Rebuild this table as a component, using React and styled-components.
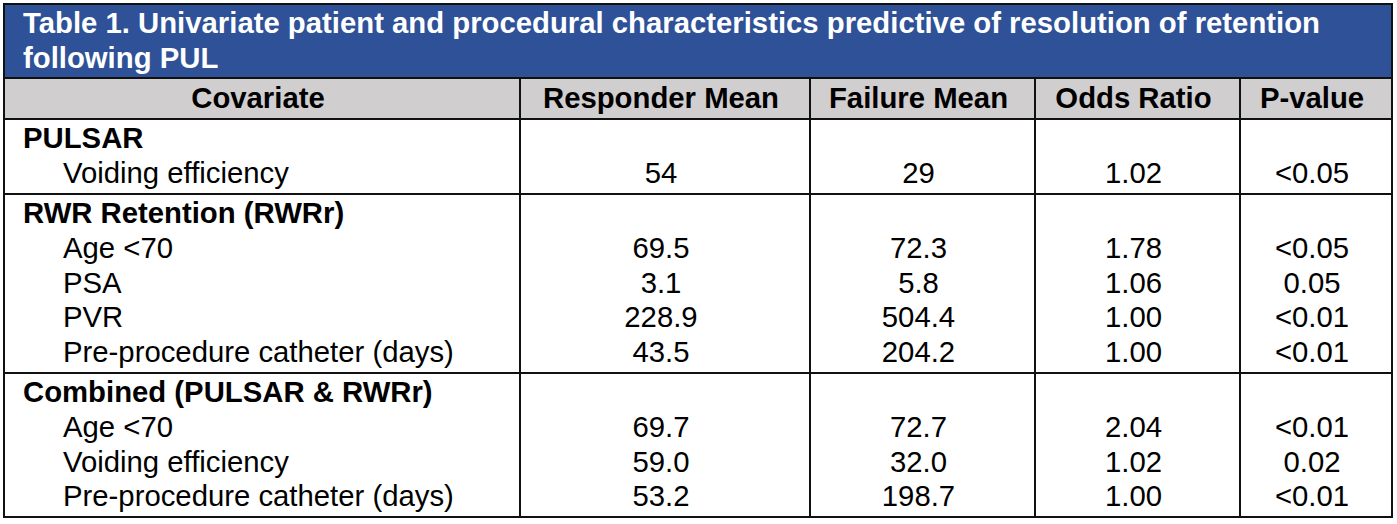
import React from "react";
import styled, { createGlobalStyle } from "styled-components";

const GlobalStyle = createGlobalStyle`
  html, body {
    margin: 0;
    padding: 0;
    background: #fff;
  }
  body {
    font-family: "Liberation Sans", Arial, sans-serif;
    color: #000;
  }
`;

const sections = [
  {
    title: "PULSAR",
    rows: [["Voiding efficiency", "54", "29", "1.02", "<0.05"]],
  },
  {
    title: "RWR Retention (RWRr)",
    rows: [
      ["Age <70", "69.5", "72.3", "1.78", "<0.05"],
      ["PSA", "3.1", "5.8", "1.06", "0.05"],
      ["PVR", "228.9", "504.4", "1.00", "<0.01"],
      ["Pre-procedure catheter (days)", "43.5", "204.2", "1.00", "<0.01"],
    ],
  },
  {
    title: "Combined (PULSAR & RWRr)",
    rows: [
      ["Age <70", "69.7", "72.7", "2.04", "<0.01"],
      ["Voiding efficiency", "59.0", "32.0", "1.02", "0.02"],
      ["Pre-procedure catheter (days)", "53.2", "198.7", "1.00", "<0.01"],
    ],
  },
];

const columns = [
  { label: "Covariate", width: 516 },
  { label: "Responder Mean", width: 290 },
  { label: "Failure Mean", width: 225 },
  { label: "Odds Ratio", width: 205 },
  { label: "P-value", width: 152 },
];

const Page = styled.div`
  padding: 3px 0 0 3px;
`;

const Table = styled.table`
  width: 1388px;
  border-collapse: collapse;
  table-layout: fixed;
  border: 2px solid #111;
  font-size: 29.3px;
  line-height: 34.8px;
`;

const Column = styled.col`
  width: ${(p) => p.$w}px;
`;

const TitleCell = styled.th`
  background: #2e5197;
  color: #fff;
  font-weight: bold;
  text-align: left;
  padding: 1px 18px 1px;
  border: 2px solid #111;
`;

const HeadCell = styled.th`
  background: #d0cece;
  font-weight: bold;
  text-align: center;
  padding: 2px 12px 3px 4px;
  border: 2px solid #111;
  white-space: nowrap;
`;

const Cell = styled.td`
  vertical-align: top;
  text-align: ${(p) => (p.$left ? "left" : "center")};
  padding: ${(p) => (p.$left ? "1px 18px 2px" : "1px 12px 2px 4px")};
  border: 2px solid #111;
`;

const Line = styled.div`
  height: 34.8px;
  white-space: nowrap;
  font-weight: ${(p) => (p.$bold ? "bold" : "normal")};
  padding-left: ${(p) => (p.$indent ? "40px" : "0")};
`;

export default function App() {
  return (
    <Page>
      <GlobalStyle />
      <Table>
        <colgroup>
          {columns.map((c) => (
            <Column key={c.label} $w={c.width} />
          ))}
        </colgroup>
        <thead>
          <tr>
            <TitleCell colSpan={5}>
              Table 1. Univariate patient and procedural characteristics predictive of resolution of retention following PUL
            </TitleCell>
          </tr>
          <tr>
            {columns.map((c) => (
              <HeadCell key={c.label}>{c.label}</HeadCell>
            ))}
          </tr>
        </thead>
        <tbody>
          {sections.map((s) => (
            <tr key={s.title}>
              <Cell $left>
                <Line $bold>{s.title}</Line>
                {s.rows.map((r) => (
                  <Line key={r[0]} $indent>
                    {r[0]}
                  </Line>
                ))}
              </Cell>
              {[1, 2, 3, 4].map((i) => (
                <Cell key={i}>
                  <Line />
                  {s.rows.map((r) => (
                    <Line key={r[0]}>{r[i]}</Line>
                  ))}
                </Cell>
              ))}
            </tr>
          ))}
        </tbody>
      </Table>
    </Page>
  );
}
